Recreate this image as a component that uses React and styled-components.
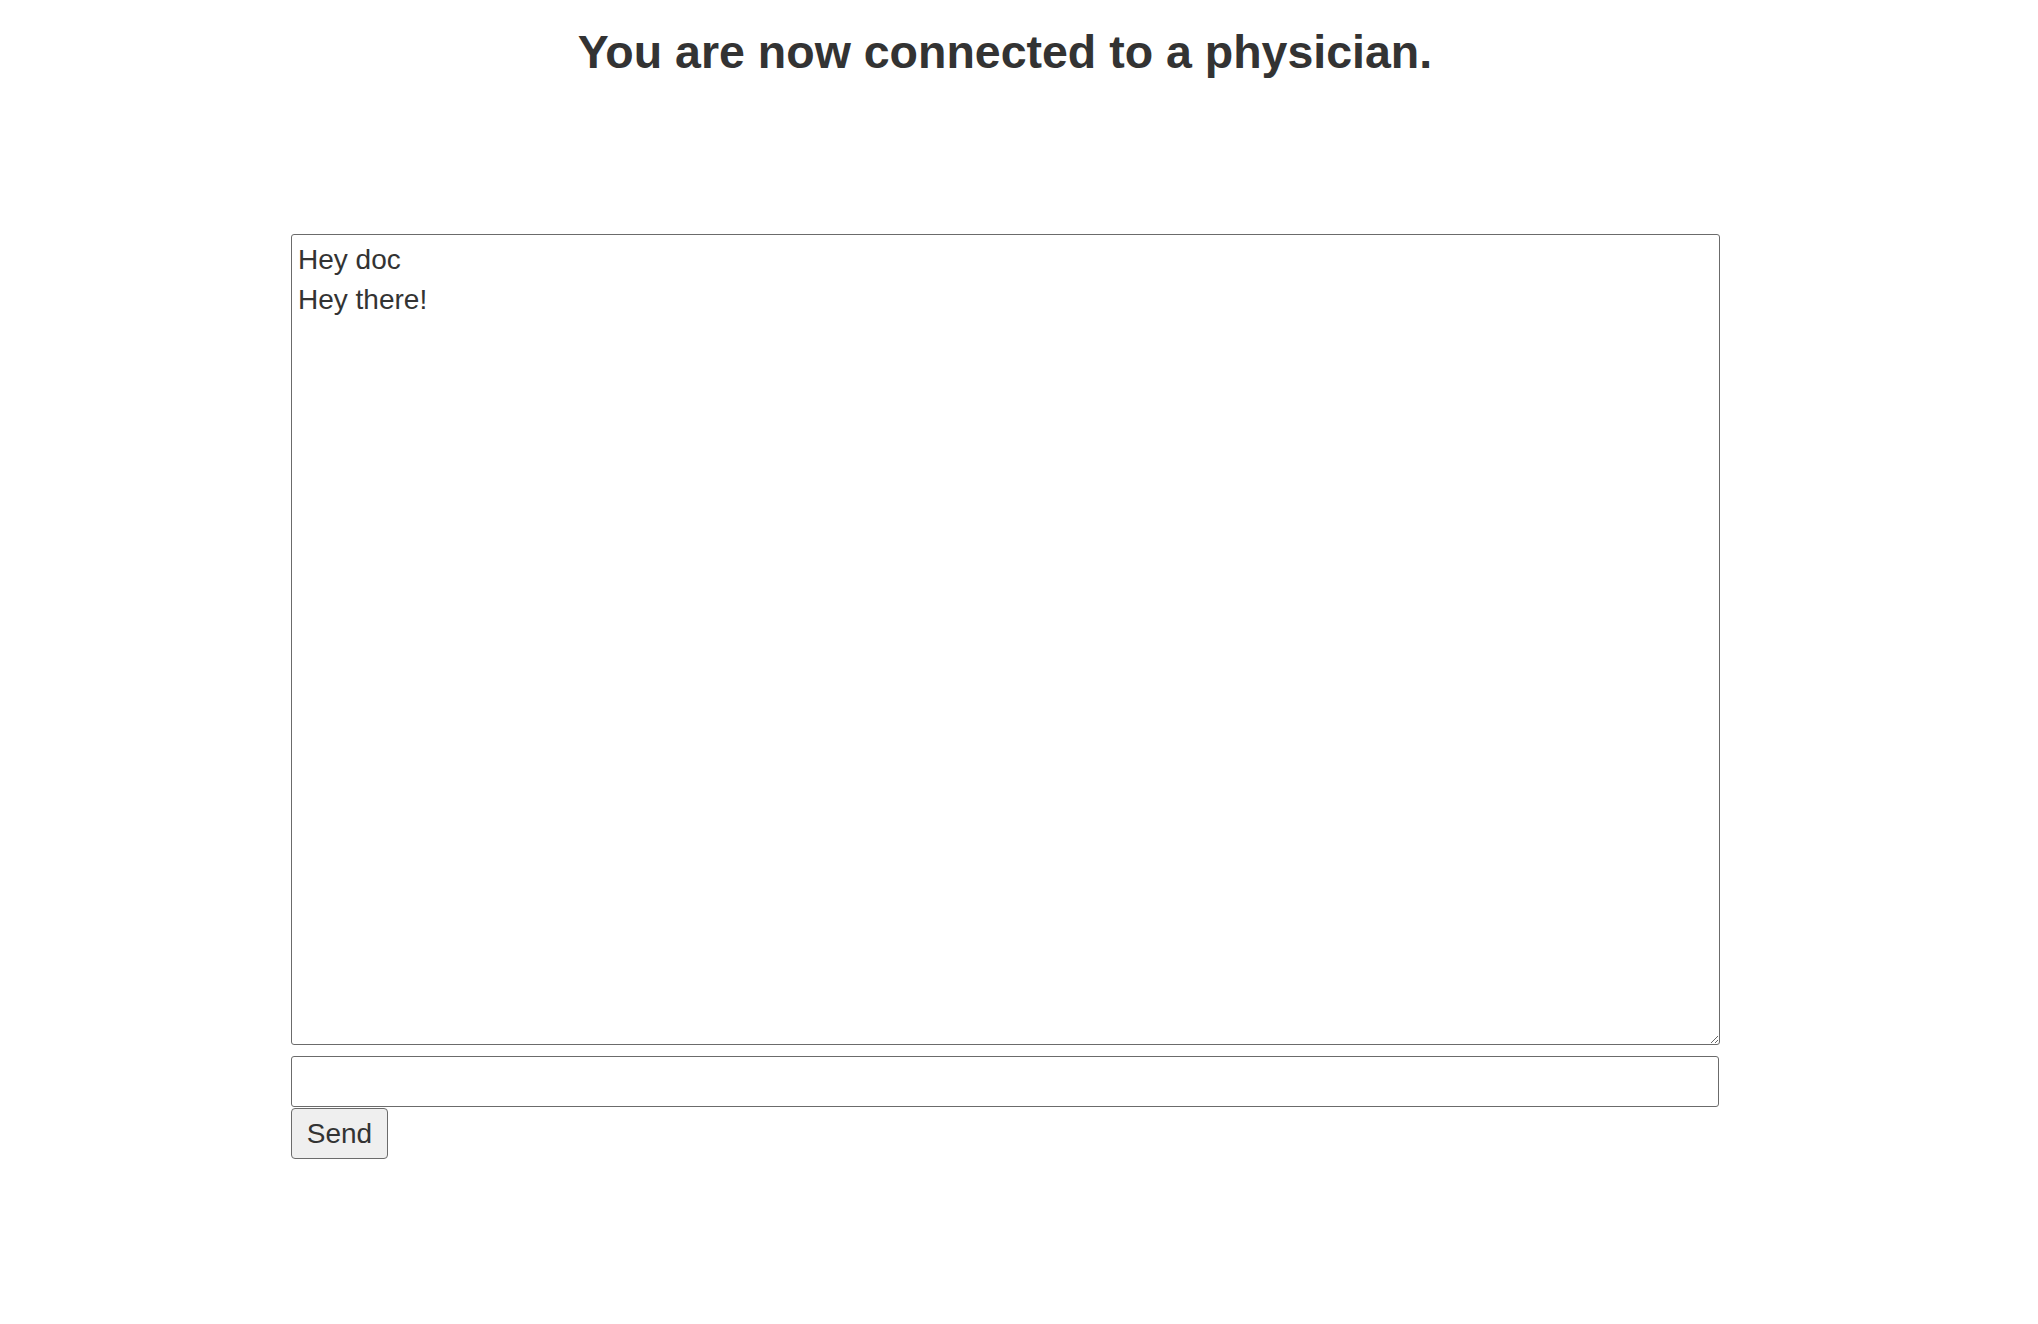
import React from 'react';
import styled, { createGlobalStyle } from 'styled-components';

const GlobalStyle = createGlobalStyle`
  html, body {
    margin: 0;
    padding: 0;
    background: #fff;
  }
  body {
    color: #333;
    font-family: "Liberation Sans", Arial, sans-serif;
    font-size: 28px;
    line-height: 40px;
  }
`;

const Page = styled.div`
  display: flex;
  flex-direction: column;
  width: 2038px;
  min-height: 1324px;
`;

const Title = styled.h3`
  color: #333;
  font-size: 46.5px;
  font-weight: 600;
  line-height: 52px;
  margin: 26px 0 0;
  padding-right: 28px;
  text-align: center;
`;

const Chat = styled.div`
  display: flex;
  flex-direction: column;
  align-items: flex-start;
  margin-top: 156px;
  padding-left: 291px;
  width: 1429px;
`;

const Log = styled.textarea`
  box-sizing: border-box;
  display: block;
  width: 1429px;
  height: 811px;
  margin: 0 0 11px;
  padding: 5px 6px 2px;
  border: 1px solid #6b6b6b;
  border-radius: 3px;
  color: #333;
  font-family: "Liberation Sans", Arial, sans-serif;
  font-size: 28px;
  line-height: 40px;
  background: #fff;
  outline: none;
`;

const MessageInput = styled.input`
  box-sizing: border-box;
  display: block;
  width: 1428px;
  height: 51px;
  margin: 0 0 1px;
  padding: 2px 6px;
  border: 1px solid #6b6b6b;
  border-radius: 3px;
  color: #333;
  font-family: "Liberation Sans", Arial, sans-serif;
  font-size: 28px;
  background: #fff;
  outline: none;
`;

const SendButton = styled.button`
  box-sizing: border-box;
  width: 97px;
  height: 51px;
  padding: 0;
  border: 1px solid #6b6b6b;
  border-radius: 4px;
  background: #efefef;
  color: #333;
  font-family: "Liberation Sans", Arial, sans-serif;
  font-size: 28px;
  cursor: pointer;
`;

export default function App() {
  return (
    <Page>
      <GlobalStyle />
      <Title>You are now connected to a physician.</Title>
      <Chat>
        <Log readOnly value={'Hey doc\nHey there!'} />
        <MessageInput type="text" />
        <SendButton>Send</SendButton>
      </Chat>
    </Page>
  );
}
